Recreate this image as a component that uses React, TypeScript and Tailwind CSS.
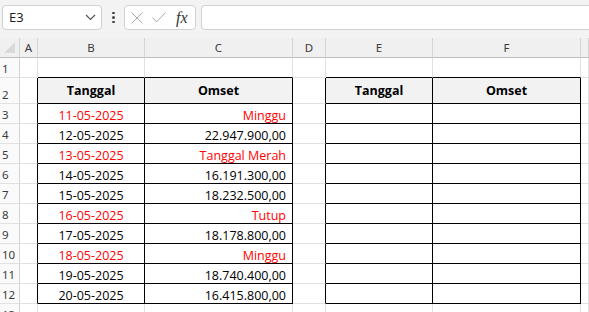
const COLS = ["A", "B", "C", "D", "E", "F", "G"];
const TABLE_COLS = ["B", "C", "E", "F"];

type Entry = { date: string; omset: string; red?: boolean };

const DATA: Entry[] = [
  { date: "11-05-2025", omset: "Minggu", red: true },
  { date: "12-05-2025", omset: "22.947.900,00" },
  { date: "13-05-2025", omset: "Tanggal Merah", red: true },
  { date: "14-05-2025", omset: "16.191.300,00" },
  { date: "15-05-2025", omset: "18.232.500,00" },
  { date: "16-05-2025", omset: "Tutup", red: true },
  { date: "17-05-2025", omset: "18.178.800,00" },
  { date: "18-05-2025", omset: "Minggu", red: true },
  { date: "19-05-2025", omset: "18.740.400,00" },
  { date: "20-05-2025", omset: "16.415.800,00" },
];

const ROWS = Array.from({ length: 13 }, (_, i) => i + 1);

const inTable = (row: number, col: string) =>
  row >= 2 && row <= 12 && TABLE_COLS.includes(col);

const cellText = (row: number, col: string) => {
  if (row === 2 && (col === "B" || col === "E")) return { text: "Tanggal", kind: "head" };
  if (row === 2 && (col === "C" || col === "F")) return { text: "Omset", kind: "head" };
  const entry = DATA[row - 3];
  if (!entry) return null;
  if (col === "B") return { text: entry.date, kind: entry.red ? "date-red" : "date" };
  if (col === "C") return { text: entry.omset, kind: entry.red ? "num-red" : "num" };
  return null;
};

function clsx(...parts: (string | false | undefined)[]) {
  return parts.filter(Boolean).join(" ");
}

function Cell({ row, col, colIdx }: { row: number; col: string; colIdx: number }) {
  const next = COLS[colIdx + 1];
  const rightDark = inTable(row, col) || (next !== undefined && inTable(row, next));
  const bottomDark = inTable(row, col) || inTable(row + 1, col);
  const content = cellText(row, col);
  const head = row === 2 && inTable(row, col);

  return (
    <div
      className={clsx(
        "flex border-r border-b overflow-hidden whitespace-nowrap",
        rightDark ? "border-r-black" : "border-r-[#e1e1e1]",
        bottomDark ? "border-b-black" : "border-b-[#e1e1e1]",
        head ? "bg-[#f2f2f2] items-center justify-center" : "bg-white items-end",
        content?.kind.startsWith("date") && "justify-center",
        content?.kind.startsWith("num") && "justify-end pr-[6px]"
      )}
    >
      {content && (
        <span
          className={clsx(
            "text-[12.5px]",
            head ? "font-bold leading-[16px] text-black" : "leading-[14px]",
            content.kind.endsWith("red") ? "text-[#ff0000]" : "text-black"
          )}
        >
          {content.text}
        </span>
      )}
    </div>
  );
}

function Toolbar() {
  return (
    <div className="flex h-[38px] shrink-0 items-start overflow-hidden bg-[#f3f3f3] pt-[5px] pl-[2px]">
      {/* name box */}
      <div className="flex h-[25px] w-[100px] shrink-0 items-center justify-between rounded-[4px] border border-[#d1d1d1] bg-white pl-[6px] pr-[5px]">
        <span className="text-[13px] leading-none text-[#1f1f1f] [font-family:'Noto_Sans',sans-serif]">E3</span>
        <svg width="11" height="7" viewBox="0 0 11 7" fill="none">
          <path d="M1 1l4.5 4.5L10 1" stroke="#555" strokeWidth="1.2" />
        </svg>
      </div>
      {/* more options */}
      <div className="ml-[10px] flex h-[25px] w-[3px] shrink-0 flex-col items-center justify-center gap-[2px]">
        <span className="h-[2.5px] w-[2.5px] rounded-full bg-[#444]" />
        <span className="h-[2.5px] w-[2.5px] rounded-full bg-[#444]" />
        <span className="h-[2.5px] w-[2.5px] rounded-full bg-[#444]" />
      </div>
      {/* cancel / enter / insert function */}
      <div className="ml-[9px] flex h-[25px] w-[72px] shrink-0 items-center rounded-[4px] border border-[#d1d1d1] bg-white pl-[6px]">
        <svg width="12" height="12" viewBox="0 0 12 12" fill="none">
          <path d="M0.5 0.5l11 11M11.5 0.5l-11 11" stroke="#ababab" strokeWidth="1" />
        </svg>
        <svg className="ml-[9px]" width="14" height="11" viewBox="0 0 14 11" fill="none">
          <path d="M0.5 5.5l4 4.5L13.5 0.5" stroke="#ababab" strokeWidth="1" />
        </svg>
        <span className="ml-[10px] text-[16px] italic leading-none text-[#333] [font-family:'Liberation_Serif',serif]">
          fx
        </span>
      </div>
      {/* formula input */}
      <div className="ml-[5px] h-[25px] w-[420px] shrink-0 rounded-[4px] border border-[#d1d1d1] bg-white" />
    </div>
  );
}

export default function App() {
  return (
    <div className="flex h-[312px] w-[589px] flex-col overflow-hidden bg-white [font-family:'Open_Sans',sans-serif]">
      <Toolbar />
      <div className="grid grid-cols-[20px_18px_107px_148px_33px_107px_148px_1fr] grid-rows-[20px_20px_26px_repeat(10,20px)_20px]">
        {/* select-all corner */}
        <div className="relative border-r border-b border-r-[#d4d4d4] border-b-[#bdbdbd] bg-[#f0f0f0]">
          <div className="absolute right-[4px] bottom-[4px] h-0 w-0 border-b-[11px] border-l-[11px] border-b-[#d9d9d9] border-l-transparent" />
        </div>
        {COLS.map((c) => (
          <div
            key={c}
            className="flex items-center justify-center border-r border-b border-r-[#d4d4d4] border-b-[#bdbdbd] bg-[#f0f0f0] text-[11.5px] text-[#3b3b3b] [font-family:'Noto_Sans',sans-serif]"
          >
            {/* G sits mostly off-screen, its label is clipped away */}
            {c === "G" ? null : c}
          </div>
        ))}
        {ROWS.map((r) => [
          <div
            key={`h${r}`}
            className="flex items-end border-r border-b border-r-[#d4d4d4] border-b-[#e1e1e1] bg-[#fafafa] pl-[2px] text-[11.5px] leading-[16px] text-[#3b3b3b] [font-family:'Noto_Sans',sans-serif]"
          >
            {r}
          </div>,
          ...COLS.map((c, i) => <Cell key={`${c}${r}`} row={r} col={c} colIdx={i} />),
        ])}
      </div>
    </div>
  );
}
